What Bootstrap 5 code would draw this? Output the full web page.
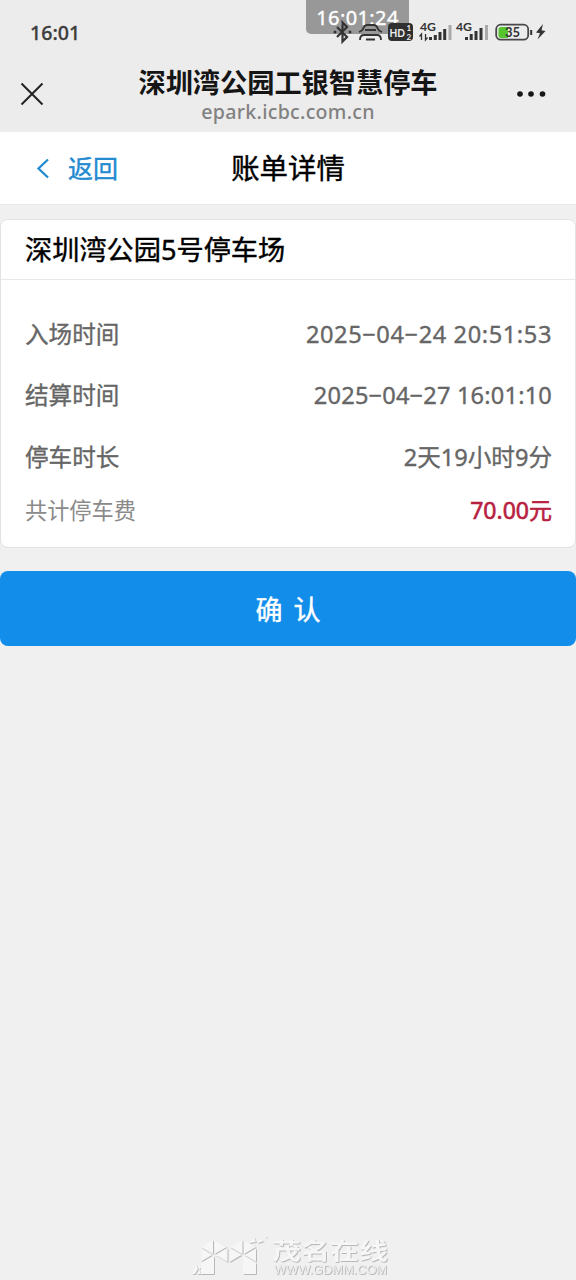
<!DOCTYPE html>
<html lang="zh-CN">
<head>
<meta charset="utf-8">
<meta name="viewport" content="width=device-width, initial-scale=1">
<title>账单详情</title>
<link href="https://cdn.jsdelivr.net/npm/bootstrap@5.3.0/dist/css/bootstrap.min.css" rel="stylesheet">
<style>
body{background:#f0f0f0;font-family:"Noto Sans","Noto Sans CJK SC",sans-serif;min-height:1280px;color:#000;overflow:hidden}
.top-area{background:#ececec;height:132px}
.status-row{height:64px;padding:0 28px 0 30px}
.status-clock{font-size:19.6px;font-weight:500;line-height:64px;color:#3d3d3d;-webkit-text-stroke:.3px;padding-top:1px}
.clock-chip{left:306px;top:0;width:103px;height:34px;background:#989898;border-radius:0 0 5px 5px;color:#fff;font-size:20px;line-height:35px;letter-spacing:.4px;-webkit-text-stroke:.4px}
.browser-row{height:68px;padding:0 30px 0 20px}
.browser-title{font-family:"Noto Sans CJK SC",sans-serif;font-size:27.2px;line-height:34px;font-weight:700;color:#151515}
.browser-url{font-weight:500;font-size:19.6px;line-height:28px;letter-spacing:.3px;color:#818181}
.browser-name{left:0;right:0;top:0}
.page-nav{height:73px;border-bottom:1px solid #e9e9e9}
.back-link{left:36px;top:1px;height:72px;color:#248bd0;font-size:25px;-webkit-text-stroke:.4px}
.page-title{font-size:28.4px;-webkit-text-stroke:.4px}
.bill-card{margin-top:14px;height:329px;border:1px solid #e2e2e2;border-radius:8px}
.bill-head{height:60px;line-height:59px;padding:0 24px;border-bottom:1px solid #e8e8e8;font-size:27.2px;background:#fff;-webkit-text-stroke:.4px}
.bill-body{padding:24px 23px 0 24px}
.bill-row{height:61.3px;font-size:23.6px;color:#666;-webkit-text-stroke:.35px}
.time-in{letter-spacing:.6px}
.time-out{letter-spacing:.18px}
.fee-row{height:45px;font-size:22.2px;color:#8a8a8a}
.fee-sum{color:#b8213f;-webkit-text-stroke:.6px;font-size:23px}
.confirm-btn{margin-top:23px;height:75px;background:#128dea;border:0;border-radius:8px;font-size:27px;-webkit-text-stroke:.4px;word-spacing:4px;padding-top:9px}
.site-mark{left:188px;top:1232px}
</style>
</head>
<body class="position-relative">
<header class="top-area">
  <div class="status-row d-flex justify-content-between align-items-center">
    <span class="status-clock">16:01</span>
    <svg class="position-relative z-1" width="216" height="28" viewBox="332 18 216 28" fill="none" stroke="#333">
      <path d="M337 27l10 10-4.500 4.500v-19L347 27l-10 10" stroke-width="2.200"/>
      <circle cx="335" cy="32" r="1.5" fill="#333" stroke="none"/><circle cx="350" cy="32" r="1.5" fill="#333" stroke="none"/>
      <path d="M359 32q3.500-1 4.500-4 1-3 4-3h6q3 0 4 3 1 3 4.500 4M360 40q0-5 4-5h13q4 0 4 5M365 30h11M366 39.500h9" stroke-width="1.8"/>
      <rect x="388" y="23" width="25" height="18" rx="4" fill="#303030" stroke="none"/>
      <g stroke="none" font-family="Lato,sans-serif" font-weight="700">
        <text x="389.500" y="36.500" font-size="11.500" textLength="15.500" lengthAdjust="spacingAndGlyphs" fill="#eee">HD</text>
        <text x="406.500" y="31" font-size="8" fill="#eee">1</text><text x="406.500" y="39.500" font-size="8" fill="#eee">2</text>
        <g fill="#333"><text x="420" y="31" font-size="11" textLength="16" lengthAdjust="spacingAndGlyphs">4G</text><text x="456" y="31" font-size="11" textLength="16" lengthAdjust="spacingAndGlyphs">4G</text></g>
      </g>
      <g stroke-width="3"><path d="M430.500 40v-3M435.300 40v-5M440 40v-8M444.700 40V29M466.500 40v-3M471.200 40v-6M476 40v-9M481 40V28"/><path d="M450 40V25M486.500 40V25" stroke="#aaa"/></g>
      <path d="M421.500 40v-6l-2 2.500M425.500 34v6l2-2.500" stroke-width="1.300"/>
      <rect x="496.200" y="24.700" width="32" height="15" rx="4.500" stroke="#484848" stroke-width="1.800"/>
      <path d="M501 27h7v11h-7q-2.500 0-2.500-2.500v-6Q498.500 27 501 27" fill="#55c42e" stroke="none"/>
      <path d="M531.200 30v5" stroke-width="2"/>
      <text x="505" y="37" font-family="Lato,sans-serif" font-weight="700" font-size="13" fill="#333" stroke="none">35</text>
      <path d="M543 24l-7 8.500 4 .7-2.500 6.300 8-8.500-4-.7z" fill="#333" stroke="none"/>
    </svg>
  </div>
  <div class="clock-chip position-absolute text-center">16:01:24</div>
  <div class="browser-row d-flex justify-content-between position-relative">
    <svg class="mt-3" width="24" height="28" fill="none" stroke="#222" stroke-width="2"><path d="M1.500 3.500l21 21M22.500 3.500l-21 21"/></svg>
    <div class="browser-name position-absolute text-center">
      <div class="browser-title">深圳湾公园工银智慧停车</div>
      <div class="browser-url">epark.icbc.com.cn</div>
    </div>
    <svg class="mt-3" width="30" height="28" fill="#161616"><circle cx="4" cy="14" r="2.800"/><circle cx="15" cy="14" r="2.800"/><circle cx="26.500" cy="14" r="2.800"/></svg>
  </div>
</header>
<nav class="page-nav bg-white position-relative d-flex justify-content-center align-items-center">
  <a class="back-link position-absolute d-flex align-items-center text-decoration-none" href="#">
    <svg width="32" height="24" fill="none" stroke="currentColor" stroke-width="2.300"><path d="M12 2.500L2.500 11.500l9.500 9"/></svg><span>返回</span>
  </a>
  <span class="page-title">账单详情</span>
</nav>
<main>
  <section class="card bill-card overflow-hidden">
    <div class="bill-head">深圳湾公园5号停车场</div>
    <div class="bill-body">
      <div class="bill-row d-flex justify-content-between align-items-center"><span>入场时间</span><span class="time-in">2025−04−24 20:51:53</span></div>
      <div class="bill-row d-flex justify-content-between align-items-center"><span>结算时间</span><span class="time-out">2025−04−27 16:01:10</span></div>
      <div class="bill-row d-flex justify-content-between align-items-center"><span>停车时长</span><span>2天19小时9分</span></div>
      <div class="fee-row d-flex justify-content-between align-items-center"><span>共计停车费</span><span class="fee-sum">70.00元</span></div>
    </div>
  </section>
  <button class="btn btn-primary confirm-btn w-100 d-block" type="button">确 认</button>
</main>
<footer class="site-mark position-absolute">
  <svg class="d-block" width="204" height="46" viewBox="188 1232 204 46">
    <defs>
      <filter id="emboss" x="-5%" y="-10%" width="115%" height="125%"><feDropShadow dx=".8" dy=".8" stdDeviation=".4" flood-color="#aaa"/></filter>
      <path id="wing" d="M201 1247l12-7v14zM201 1248.500l11 6.500-11 6.500zM201 1263l12-7 1 1v17h-13zM214.500 1240l12.500 7-12.500 7zM227.500 1248v14l-12-7z"/>
    </defs>
    <g filter="url(#emboss)" fill="#f6f6f6">
      <use href="#wing"/><use href="#wing" transform="translate(457 0) scale(-1 1)"/>
      <path d="M249 1243l5-6 2 5zM257 1238l7 3-6 2zM265 1237l2-1-1 2zM192 1274l4-9 2 4-3 5zM199 1266l3 2-3 1zM197 1274l2-4 2 4z"/>
      <text transform="translate(272 1259) scale(1.26 1)" font-family="Noto Sans CJK SC,sans-serif" font-weight="700" font-size="23">茂名在线</text>
      <text x="274" y="1274" font-family="Liberation Sans,sans-serif" font-size="12" fill="#eee" textLength="113" lengthAdjust="spacingAndGlyphs">WWW.GDMM.COM</text>
    </g>
  </svg>
</footer>
<script src="https://cdn.jsdelivr.net/npm/bootstrap@5.3.0/dist/js/bootstrap.bundle.min.js"></script>
</body>
</html>
